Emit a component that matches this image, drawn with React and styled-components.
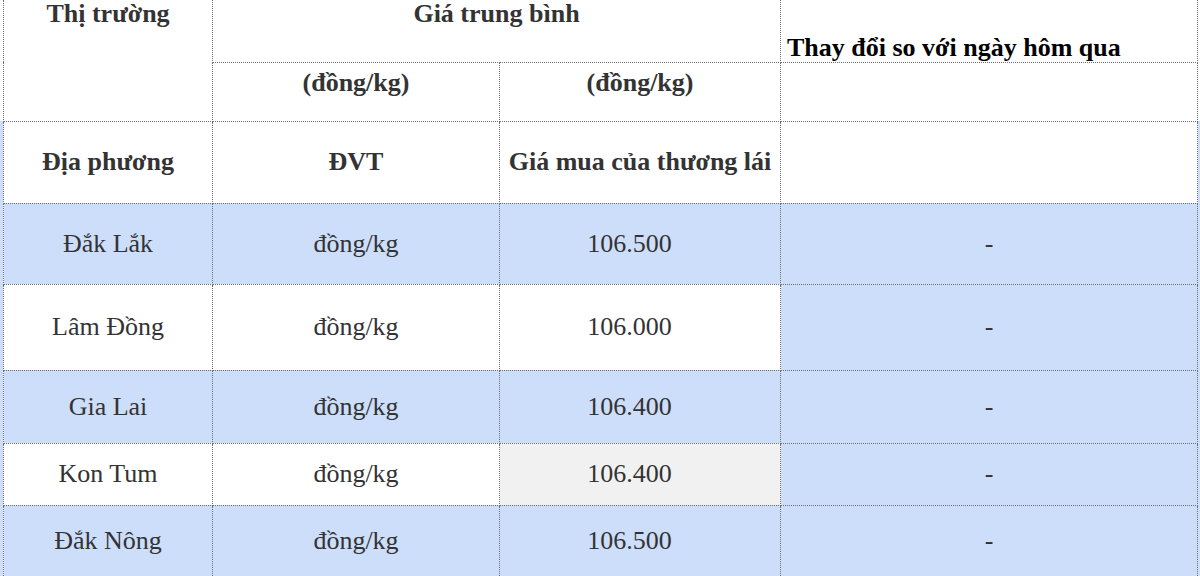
import React from "react";
import styled, { createGlobalStyle } from "styled-components";

const GlobalStyle = createGlobalStyle`
  html, body {
    margin: 0;
    padding: 0;
    background: #ffffff;
  }
  body {
    font-family: "Liberation Serif", "Times New Roman", serif;
    overflow: hidden;
  }
`;

const BLUE = "#cddefb";
const GREY = "#f1f1f1";
const LINE = "1px dotted #6f6f6f";

const Pagina = styled.div`
  width: 1200px;
  height: 576px;
  overflow: hidden;
  padding-left: 3px;
  box-sizing: border-box;
  background: linear-gradient(to bottom, #ffffff 121px, ${BLUE} 121px);
`;

const Tabla = styled.table`
  width: 1194px;
  table-layout: fixed;
  border-collapse: collapse;
  background: #ffffff;
`;

const Fila = styled.tr`
  height: ${(props) => props.alto}px;
`;

const Encabezado = styled.th`
  border: ${LINE};
  padding: 0;
  font-size: 26px;
  font-weight: 700;
  color: ${(props) => (props.negro ? "#000000" : "#333333")};
  text-align: ${(props) => (props.izquierda ? "left" : "center")};
  vertical-align: ${(props) => props.alinear || "middle"};
  padding-left: ${(props) => (props.izquierda ? "6px" : "0")};
  padding-top: ${(props) => props.arriba || "0"};
  padding-bottom: ${(props) => props.abajo || "0"};
  line-height: 28px;
  white-space: nowrap;
  border-top: ${(props) => (props.sinArriba ? "none" : LINE)};
`;

const Celda = styled.td`
  border: ${LINE};
  padding: 0 ${(props) => (props.precio ? "21px" : "0")} 0 0;
  font-size: 26px;
  color: #333333;
  text-align: center;
  vertical-align: middle;
  line-height: 28px;
  white-space: nowrap;
  background: ${(props) =>
    props.fondo === "azul" ? BLUE : props.fondo === "gris" ? GREY : "#ffffff"};
`;

const filas = [
  { lugar: "Đắk Lắk", precio: "106.500", alto: 81, fondos: ["azul", "azul", "azul", "azul"] },
  { lugar: "Lâm Đồng", precio: "106.000", alto: 86, fondos: ["blanco", "blanco", "blanco", "azul"] },
  { lugar: "Gia Lai", precio: "106.400", alto: 73, fondos: ["azul", "azul", "azul", "azul"] },
  { lugar: "Kon Tum", precio: "106.400", alto: 62, fondos: ["blanco", "blanco", "gris", "azul"] },
  { lugar: "Đắk Nông", precio: "106.500", alto: 72, fondos: ["azul", "azul", "azul", "azul"] },
];

export default function App() {
  return (
    <>
      <GlobalStyle />
      <Pagina>
        <Tabla>
          <colgroup>
            <col style={{ width: 209 }} />
            <col style={{ width: 287 }} />
            <col style={{ width: 281 }} />
            <col style={{ width: 417 }} />
          </colgroup>
          <thead>
            <Fila alto={62}>
              <Encabezado rowSpan={2} alinear="top" sinArriba>
                Thị trường
              </Encabezado>
              <Encabezado colSpan={2} alinear="top" sinArriba>
                Giá trung bình
              </Encabezado>
              <Encabezado negro izquierda alinear="bottom" sinArriba>
                Thay đổi so với ngày hôm qua
              </Encabezado>
            </Fila>
            <Fila alto={59}>
              <Encabezado alinear="top" arriba="6px">
                (đồng/kg)
              </Encabezado>
              <Encabezado alinear="top" arriba="6px">
                (đồng/kg)
              </Encabezado>
              <Encabezado />
            </Fila>
            <Fila alto={82}>
              <Encabezado>Địa phương</Encabezado>
              <Encabezado>ĐVT</Encabezado>
              <Encabezado>Giá mua của thương lái</Encabezado>
              <Encabezado />
            </Fila>
          </thead>
          <tbody>
            {filas.map((f) => (
              <Fila key={f.lugar} alto={f.alto}>
                <Celda fondo={f.fondos[0]}>{f.lugar}</Celda>
                <Celda fondo={f.fondos[1]}>đồng/kg</Celda>
                <Celda fondo={f.fondos[2]} precio>
                  {f.precio}
                </Celda>
                <Celda fondo={f.fondos[3]}>-</Celda>
              </Fila>
            ))}
          </tbody>
        </Tabla>
      </Pagina>
    </>
  );
}
